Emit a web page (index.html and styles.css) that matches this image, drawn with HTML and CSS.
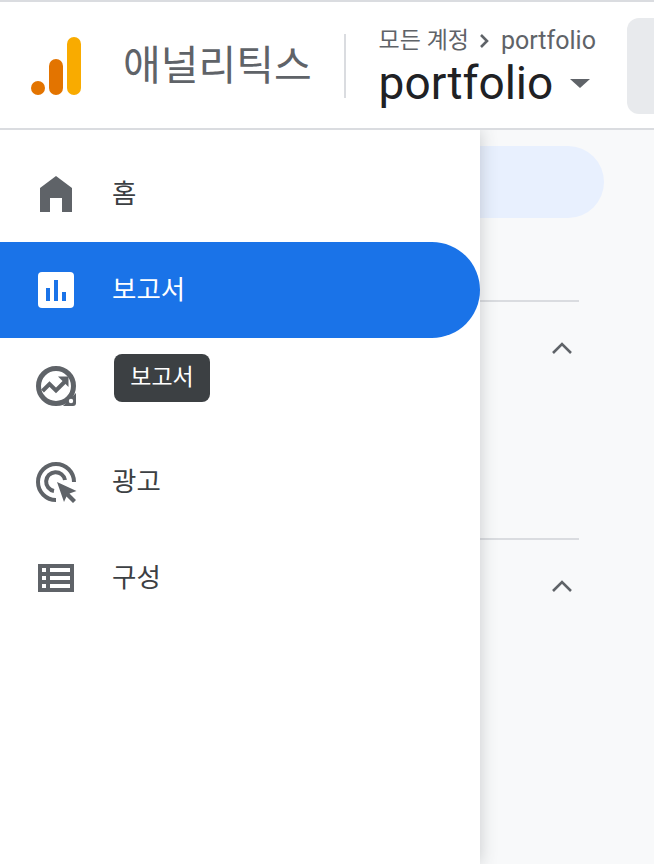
FILE: index.html
```html
<!DOCTYPE html>
<html lang="ko">
<head>
    <title>애널리틱스</title>
    <link rel="stylesheet" href="styles.css">
</head>
<body>

<header class="header">
    <svg class="logo" width="52" height="58" viewBox="0 0 52 58">
        <rect x="37" y="0" width="14" height="58" rx="7" fill="#f9ab00"/>
        <rect x="19" y="22" width="14" height="36" rx="7" fill="#e37400"/>
        <circle cx="8" cy="51" r="7" fill="#e37400"/>
    </svg>
    <div class="product-name">애널리틱스</div>
    <div class="header-divider"></div>
    <div class="account">
        <div class="breadcrumb">
            <span>모든 계정</span>
            <svg width="12" height="16" viewBox="0 0 12 16">
                <path d="M2 2l6 6-6 6" fill="none" stroke="#5f6368" stroke-width="2.6"/>
            </svg>
            <span class="breadcrumb-name">portfolio</span>
        </div>
        <div class="property">
            <span>portfolio</span>
            <span class="caret"></span>
        </div>
    </div>
    <div class="search-box"></div>
</header>

<div class="content">
    <nav class="sidebar">
        <a class="nav-item">
            <span class="nav-icon">
                <svg width="32" height="36" viewBox="0 0 32 36">
                    <path d="M16 0L32 12V36H22V22H10V36H0V12Z" fill="#5f6368"/>
                </svg>
            </span>
            <span class="nav-label">홈</span>
        </a>
        <a class="nav-item active">
            <span class="nav-icon">
                <svg width="36" height="36" viewBox="0 0 36 36">
                    <rect width="36" height="36" rx="4" fill="#fff"/>
                    <rect x="8" y="16" width="4" height="13" fill="#1a73e8"/>
                    <rect x="16" y="8" width="4" height="21" fill="#1a73e8"/>
                    <rect x="24" y="20" width="4" height="9" fill="#1a73e8"/>
                </svg>
            </span>
            <span class="nav-label">보고서</span>
        </a>
        <a class="nav-item">
            <span class="nav-icon">
                <svg width="40" height="40" viewBox="0 0 40 40">
                    <circle cx="20" cy="20" r="17.500" fill="none" stroke="#5f6368" stroke-width="5"/>
                    <path d="M27 40H37Q40 40 40 37V27Z" fill="#5f6368"/>
                    <path d="M6.500 25l7-7 6.500 6.500 9-9" fill="none" stroke="#5f6368" stroke-width="4"/>
                    <path d="M22 10.500h10.500v10.500z" fill="#5f6368"/>
                    <circle cx="35" cy="35" r="2.200" fill="#fff"/>
                </svg>
            </span>
            <div class="tooltip">보고서</div>
        </a>
        <a class="nav-item">
            <span class="nav-icon">
                <svg width="41" height="41" viewBox="0 0 41 41">
                    <path d="M20 38A18 18 0 1 1 38 20" fill="none" stroke="#5f6368" stroke-width="4"/>
                    <path d="M18 29A9.500 9.500 0 1 1 29 18" fill="none" stroke="#5f6368" stroke-width="4"/>
                    <path d="M21 20L40.500 29L33.500 31.500L40 38L37 41L30.500 34.500L28 40Z" fill="#5f6368"/>
                </svg>
            </span>
            <span class="nav-label">광고</span>
        </a>
        <a class="nav-item">
            <span class="nav-icon">
                <svg width="36" height="28" viewBox="0 0 36 28">
                    <rect width="36" height="28" fill="#5f6368"/>
                    <rect x="4" y="4" width="4" height="4" fill="#fff"/>
                    <rect x="12" y="4" width="20" height="4" fill="#fff"/>
                    <rect x="4" y="12" width="4" height="4" fill="#fff"/>
                    <rect x="12" y="12" width="20" height="4" fill="#fff"/>
                    <rect x="4" y="20" width="4" height="4" fill="#fff"/>
                    <rect x="12" y="20" width="20" height="4" fill="#fff"/>
                </svg>
            </span>
            <span class="nav-label">구성</span>
        </a>
    </nav>

    <main class="main">
        <div class="pill"></div>
        <section class="panel">
            <svg width="20" height="12" viewBox="0 0 20 12">
                <path d="M1 11l9-9 9 9" fill="none" stroke="#5f6368" stroke-width="2.600"/>
            </svg>
        </section>
        <section class="panel">
            <svg width="20" height="12" viewBox="0 0 20 12">
                <path d="M1 11l9-9 9 9" fill="none" stroke="#5f6368" stroke-width="2.600"/>
            </svg>
        </section>
    </main>
</div>

</body>
</html>
```

FILE: styles.css
```css
html, body {
    height: 100%;
}

body {
    margin: 0;
    display: flex;
    flex-direction: column;
    overflow: hidden;
    font-family: Roboto, "Noto Sans CJK KR", sans-serif;
    background-color: #fff;
}

.header {
    position: relative;
    z-index: 2;
    display: flex;
    align-items: center;
    flex-shrink: 0;
    height: 126px;
    padding-left: 30px;
    background-color: #fff;
    border-top: 2px solid #dadce0;
    border-bottom: 2px solid #dadce0;
}

.logo {
    flex-shrink: 0;
    margin-top: 2px;
}

.product-name {
    margin: 0 0 6px 41px;
    font-size: 41px;
    color: #5f6368;
    white-space: nowrap;
}

.header-divider {
    flex-shrink: 0;
    width: 2px;
    height: 64px;
    margin: 2px 33px 0 32px;
    background-color: #dadce0;
}

.account {
    flex-shrink: 0;
    margin-top: 6px;
}

.breadcrumb {
    display: flex;
    align-items: center;
    gap: 10px;
    font-size: 23px;
    line-height: 30px;
    color: #5f6368;
    white-space: nowrap;
}

.breadcrumb-name {
    font-size: 25px;
}

.property {
    display: flex;
    align-items: center;
    gap: 17px;
    font-size: 46px;
    line-height: 54px;
    color: #202124;
}

.caret {
    width: 0;
    height: 0;
    border-left: 10px solid transparent;
    border-right: 10px solid transparent;
    border-top: 9px solid #5f6368;
}

.search-box {
    flex: 1;
    align-self: flex-start;
    height: 96px;
    margin: 16px 0 0 31px;
    background-color: #e8eaed;
    border-radius: 12px 0 0 12px;
}

.content {
    flex: 1;
    display: flex;
    min-height: 0;
}

.sidebar {
    position: relative;
    z-index: 1;
    flex-shrink: 0;
    width: 480px;
    padding-top: 16px;
    background-color: #fff;
    box-shadow: 0 0 16px rgba(60, 64, 67, 0.25);
}

.nav-item {
    position: relative;
    display: flex;
    align-items: center;
    height: 96px;
    font-size: 26.5px;
    color: #3c4043;
    border-radius: 0 48px 48px 0;
}

.nav-item.active {
    color: #fff;
    background-color: #1a73e8;
}

.nav-icon {
    display: flex;
    align-items: center;
    justify-content: center;
    width: 112px;
    flex-shrink: 0;
}

.nav-label {
    margin-bottom: 5px;
}

.tooltip {
    position: absolute;
    left: 114px;
    top: 16px;
    width: 96px;
    height: 48px;
    font-size: 23px;
    line-height: 47px;
    text-align: center;
    color: #fff;
    background-color: #3c4043;
    border-radius: 8px;
}

.main {
    flex: 1;
    background-color: #f8f9fa;
}

.pill {
    width: 124px;
    height: 72px;
    margin-top: 16px;
    background-color: #e8f0fe;
    border-radius: 0 36px 36px 0;
}

.panel {
    display: flex;
    justify-content: flex-end;
    width: 99px;
    height: 238px;
    padding-top: 40px;
    padding-right: 7px;
    box-sizing: border-box;
    border-top: 2px solid #dadce0;
}

.panel:first-of-type {
    margin-top: 82px;
}
```
